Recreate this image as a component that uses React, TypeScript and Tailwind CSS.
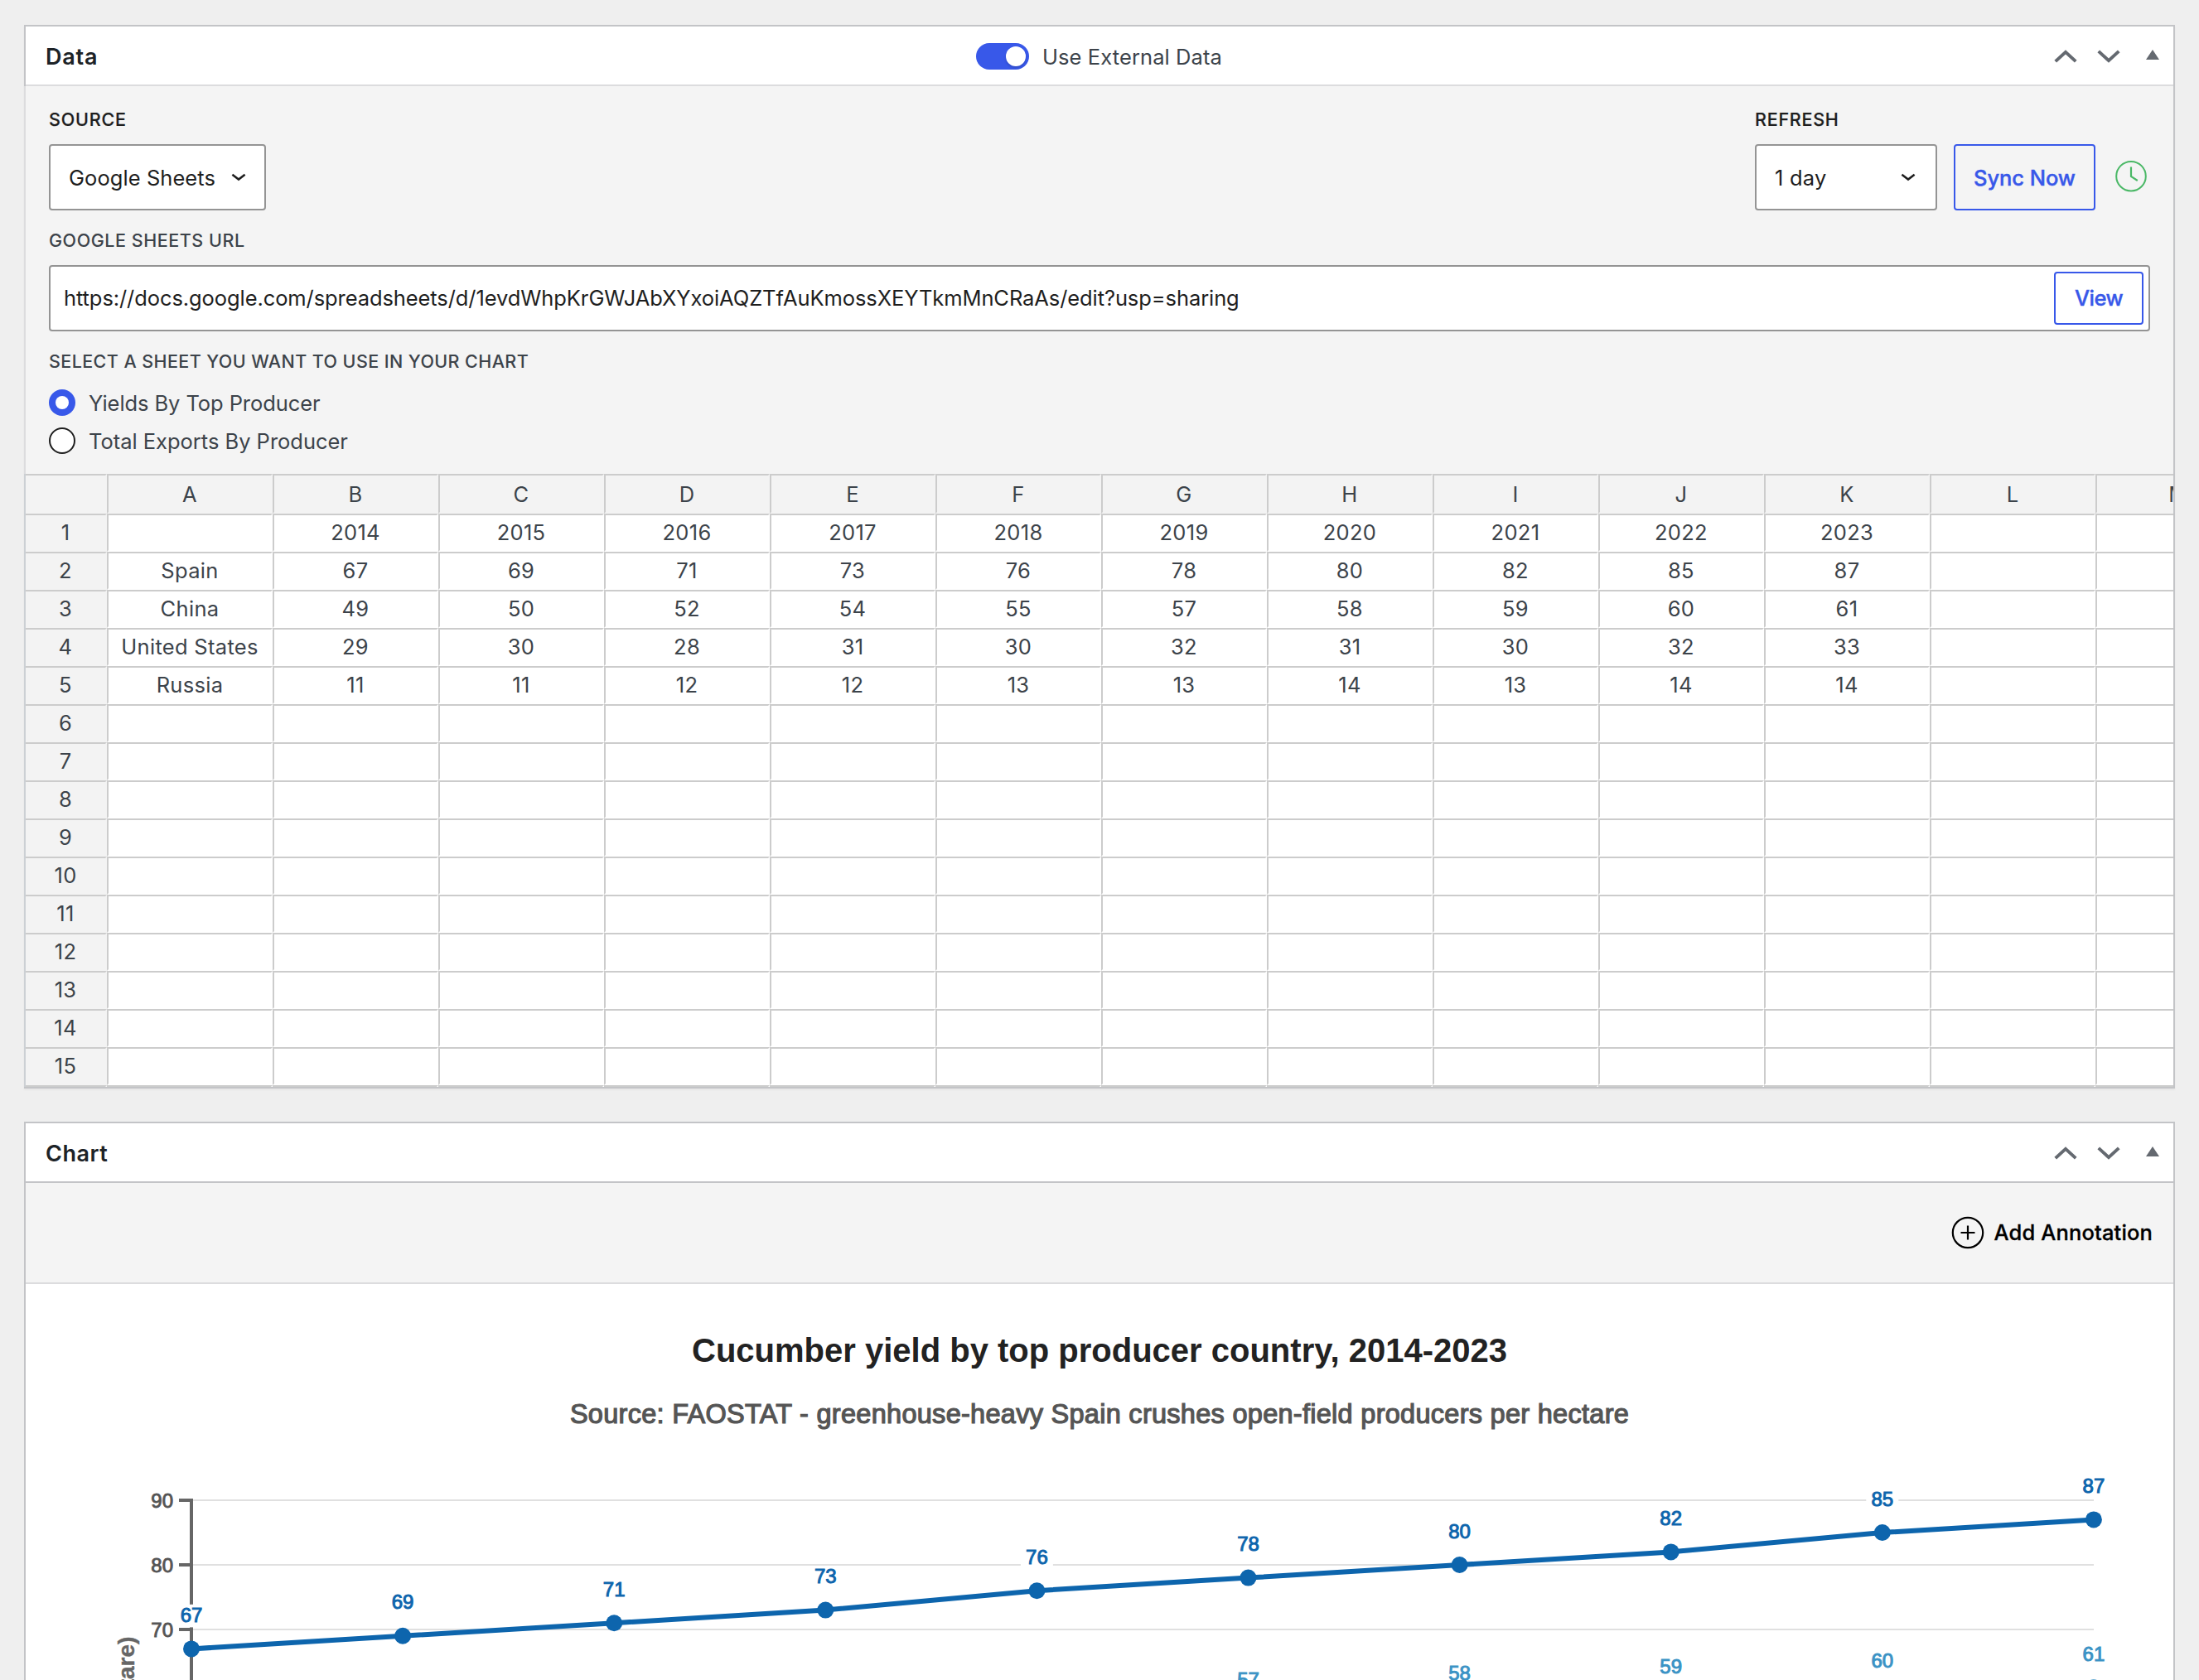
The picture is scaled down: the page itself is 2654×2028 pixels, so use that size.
import React from "react";

const COLUMNS = ["A", "B", "C", "D", "E", "F", "G", "H", "I", "J", "K", "L", "M"];

const SHEET: string[][] = [
  ["", "2014", "2015", "2016", "2017", "2018", "2019", "2020", "2021", "2022", "2023"],
  ["Spain", "67", "69", "71", "73", "76", "78", "80", "82", "85", "87"],
  ["China", "49", "50", "52", "54", "55", "57", "58", "59", "60", "61"],
  ["United States", "29", "30", "28", "31", "30", "32", "31", "30", "32", "33"],
  ["Russia", "11", "11", "12", "12", "13", "13", "14", "13", "14", "14"],
];

/* The sixteenth row is clipped so that only its top rule closes the grid. */
const ROWS = Array.from({ length: 16 }, (_, i) => i);

function HeaderControls() {
  return (
    <div className="flex items-start pr-[17px] pt-[28px] text-[#646970]">
      <svg width="28" height="16" viewBox="0 0 28 16" fill="currentColor">
        <path d="M14 0.2 27.6 12.8 24.9 15.6 14 5.6 3.1 15.6 0.4 12.8Z" />
      </svg>
      <svg className="ml-6" width="28" height="16" viewBox="0 0 28 16" fill="currentColor">
        <path d="M14 15.8 27.6 3.2 24.9 0.4 14 10.4 3.1 0.4 0.4 3.2Z" />
      </svg>
      <svg className="ml-[31px]" width="16" height="12" viewBox="0 0 16 12" fill="currentColor">
        <path d="M8 0 16 12H0Z" />
      </svg>
    </div>
  );
}

function SmallChevron() {
  return (
    <svg width="18" height="10" viewBox="0 0 18 10" fill="none" stroke="#1e1e1e" strokeWidth="2.5">
      <path d="M1.4 1.8 9 7.6 16.6 1.8" />
    </svg>
  );
}

function DataPanel() {
  return (
    <section className="h-[1284px] w-[2596px] border-2 border-[#c3c4c7] bg-white shadow-[0_2px_2px_rgba(0,0,0,0.04)]">
      <header className="flex h-[72px] justify-between border-b-2 border-[#dcdcde]">
        <h2 className="w-[1147px] pl-6 text-[27px] font-semibold leading-[74px] tracking-[0.8px] text-[#1d2327]">
          Data
        </h2>
        <label className="flex flex-1 items-center pt-0.5">
          <span className="flex h-8 w-16 items-center justify-end rounded-full bg-[#3858e9] pr-1">
            <span className="size-6 rounded-full bg-white shadow-[0_2px_3px_rgba(0,0,0,0.15)]" />
          </span>
          <span className="ml-4 pt-0.5 text-[25.5px] leading-8 tracking-[0.09px]">Use External Data</span>
        </label>
        <HeaderControls />
      </header>

      <div className="-ml-0.5 h-[468px] border-l-2 border-[#dcdcde] bg-[#f4f4f4] px-7 pt-[26px]">
        <div className="flex justify-between">
          <div>
            <div className="h-7 text-[21.5px] font-medium leading-7 tracking-[0.8px] text-[#1e1e1e] [-webkit-text-stroke:0.2px]">
              SOURCE
            </div>
            <div className="mt-4 flex h-20 w-[262px] items-center justify-between rounded-[4px] border-2 border-[#949494] bg-white px-[22px] text-[25.5px] text-[#1e1e1e]">
              <span className="pt-0.5 tracking-[0.06px]">Google Sheets</span>
              <SmallChevron />
            </div>
          </div>
          <div className="pr-[3px]">
            <div className="h-7 text-[21.5px] font-medium leading-7 tracking-[0.75px] text-[#1e1e1e] [-webkit-text-stroke:0.2px]">
              REFRESH
            </div>
            <div className="mt-4 flex">
              <div className="flex h-20 w-[220px] items-center justify-between rounded-[4px] border-2 border-[#949494] bg-white pl-[22px] pr-6 text-[25.5px] text-[#1e1e1e]">
                <span className="pt-0.5 tracking-[0.2px]">1 day</span>
                <SmallChevron />
              </div>
              <button className="ml-5 h-20 w-[171px] rounded-[4px] border-2 border-[#3858e9] pt-0.5 text-[25.5px] font-medium tracking-[-0.08px] text-[#3858e9] [-webkit-text-stroke:0.4px]">
                Sync Now
              </button>
              <svg className="ml-6 mt-[19px]" width="39" height="40" viewBox="0 0 39 40" fill="none" stroke="#4ab866" strokeWidth="2">
                <circle cx="19" cy="19.7" r="17.8" />
                <path d="M19 8.4V20L26.8 25" strokeWidth="2.2" />
              </svg>
            </div>
          </div>
        </div>

        <div className="mt-[22px] h-7 text-[21.5px] font-medium leading-7 tracking-[0.54px]">GOOGLE SHEETS URL</div>
        <div className="mt-4 flex h-20 items-center justify-between rounded-[4px] border-2 border-[#949494] bg-white pl-4 pr-1.5 text-[25.5px]">
          <span className="pt-px tracking-[-0.09px] text-[#1e1e1e]">
            https://docs.google.com/spreadsheets/d/1evdWhpKrGWJAbXYxoiAQZTfAuKmossXEYTkmMnCRaAs/edit?usp=sharing
          </span>
          <button className="h-16 w-[108px] rounded-[4px] border-2 border-[#3858e9] pt-px font-medium tracking-[-0.5px] text-[#3858e9] [-webkit-text-stroke:0.4px]">
            View
          </button>
        </div>

        <div className="mt-[22px] h-7 text-[21.5px] font-medium leading-7 tracking-[0.41px]">
          SELECT A SHEET YOU WANT TO USE IN YOUR CHART
        </div>
        <div className="mt-5 flex h-8 items-center text-[25.5px] leading-8">
          <span className="flex size-8 items-center justify-center rounded-full bg-[#3858e9]">
            <span className="size-4 rounded-full bg-white" />
          </span>
          <span className="ml-4 pt-px tracking-[-0.08px]">Yields By Top Producer</span>
        </div>
        <div className="mt-3.5 flex h-8 items-center text-[25.5px] leading-8">
          <span className="size-8 rounded-full border-2 border-[#1e1e1e] bg-white" />
          <span className="ml-4 pt-px tracking-[-0.02px]">Total Exports By Producer</span>
        </div>
      </div>

      <div className="-ml-0.5 h-[740px] overflow-hidden border-l-2 border-[#ccd0d4] text-[25.5px] tracking-[0.3px]">
        <div className="flex w-[2698px]">
          <div className="h-12 w-[98px] border-y-2 border-r-2 border-x-transparent border-b-transparent border-t-[#cccccc] bg-[#f3f3f3]" />
          {COLUMNS.map((c) => (
            <div
              key={c}
              className="flex h-12 w-[200px] items-center justify-center border-2 border-b-transparent border-l-[#cccccc] border-r-transparent border-t-[#cccccc] bg-[#f3f3f3] pt-0.5"
            >
              {c}
            </div>
          ))}
        </div>
        {ROWS.map((r) => (
          <div key={r} className="flex w-[2698px]">
            <div className="flex h-[46px] w-[98px] items-center justify-center border-y-2 border-r-2 border-x-transparent border-b-transparent border-t-[#cccccc] bg-[#f3f3f3]">
              {r < 15 ? r + 1 : ""}
            </div>
            {COLUMNS.map((c, i) => (
              <div
                key={c}
                className="flex h-[46px] w-[200px] items-center justify-center border-2 border-b-transparent border-l-[#cccccc] border-r-transparent border-t-[#cccccc] bg-white"
              >
                {SHEET[r]?.[i] ?? ""}
              </div>
            ))}
          </div>
        ))}
      </div>
    </section>
  );
}

const SPAIN = [67, 69, 71, 73, 76, 78, 80, 82, 85, 87];
const CHINA = [49, 50, 52, 54, 55, 57, 58, 59, 60, 61];

/* Plot geometry: ten evenly spaced years, 7.8 px per unit, 90 at the top rule. */
const px = (i: number) => 200 + i * 255.1;
const py = (v: number) => 61 + (90 - v) * 7.8;

function Series({ values, color }: { values: number[]; color: string }) {
  return (
    <g>
      {values.map((v, i) => (
        <rect key={i} x={px(i) - 19.5} y={py(v) - 53.6} width="39" height="27.6" fill="#ffffff" />
      ))}
      <polyline points={values.map((v, i) => `${px(i)},${py(v)}`).join(" ")} fill="none" stroke={color} strokeWidth="6" />
      {values.map((v, i) => (
        <g key={i} fill={color}>
          <circle cx={px(i)} cy={py(v)} r="10" />
          <text x={px(i)} y={py(v) - 32.4} textAnchor="middle" fontSize="24" stroke={color} strokeWidth="1">
            {v}
          </text>
        </g>
      ))}
    </g>
  );
}

function LineChart() {
  return (
    <svg className="block shrink-0" width="2592" height="278" viewBox="0 0 2592 278" fontFamily="'Liberation Sans', Arial, sans-serif">
      {[90, 80, 70].map((v) => (
        <g key={v}>
          <path d={`M202 ${py(v)}H2496`} stroke="#e0e0e0" strokeWidth="2" />
          <path d={`M185 ${py(v)}H202`} stroke="#666666" strokeWidth="4" />
          <text x="178" y={py(v) + 9} textAnchor="end" fontSize="24" fill="#555555" stroke="#555555" strokeWidth="0.9">
            {v}
          </text>
        </g>
      ))}
      <path d="M200 59V278" stroke="#666666" strokeWidth="4" />
      <text transform="translate(130.6 225.6) rotate(-90)" textAnchor="end" fontSize="28" fontWeight="700" fill="#666666" stroke="#666666" strokeWidth="0.4">
        Yield (tonnes per hectare)
      </text>
      <Series values={SPAIN} color="#0d65ad" />
      <Series values={CHINA} color="#3b93c5" />
    </svg>
  );
}

function ChartPanel() {
  return (
    <section className="flex h-[720px] w-[2596px] flex-col border-2 border-[#c3c4c7] bg-white">
      <header className="flex h-[72px] shrink-0 justify-between border-b-2 border-[#c3c4c7]">
        <h2 className="pl-6 text-[27px] font-semibold leading-[73px] tracking-[0.5px] text-[#1d2327]">Chart</h2>
        <HeaderControls />
      </header>
      <div className="flex h-[122px] shrink-0 items-center justify-end border-b-2 border-[#dcdcde] bg-[#f4f4f4] pr-[25px] text-black">
        <svg width="40" height="40" viewBox="0 0 40 40" fill="none" stroke="currentColor" strokeWidth="2.2">
          <circle cx="20" cy="20" r="18.2" />
          <path d="M11.5 20H28.5M20 11.5V28.5" />
        </svg>
        <span className="ml-3 pt-px text-[25.5px] font-medium tracking-[0.14px] [-webkit-text-stroke:0.3px]">Add Annotation</span>
      </div>
      <h3 className="mt-[55px] h-[50px] shrink-0 text-center font-['Liberation_Sans',Arial,sans-serif] text-[40px] font-bold leading-[50px] text-[#222222]">
        Cucumber yield by top producer country, 2014-2023
      </h3>
      <p className="mt-8 h-10 shrink-0 text-center font-['Liberation_Sans',Arial,sans-serif] text-[32.5px] leading-10 tracking-[0.28px] text-[#555555] [-webkit-text-stroke:1.2px_#555555]">
        Source: FAOSTAT - greenhouse-heavy Spain crushes open-field producers per hectare
      </p>
      <div className="mt-[23px]">
        <LineChart />
      </div>
    </section>
  );
}

export default function App() {
  return (
    <div className="flex h-[2028px] w-[2654px] flex-col gap-10 overflow-hidden bg-[#efefef] pl-[29px] pt-[30px] font-['Inter',sans-serif] text-[#3c434a]">
      <DataPanel />
      <ChartPanel />
    </div>
  );
}
